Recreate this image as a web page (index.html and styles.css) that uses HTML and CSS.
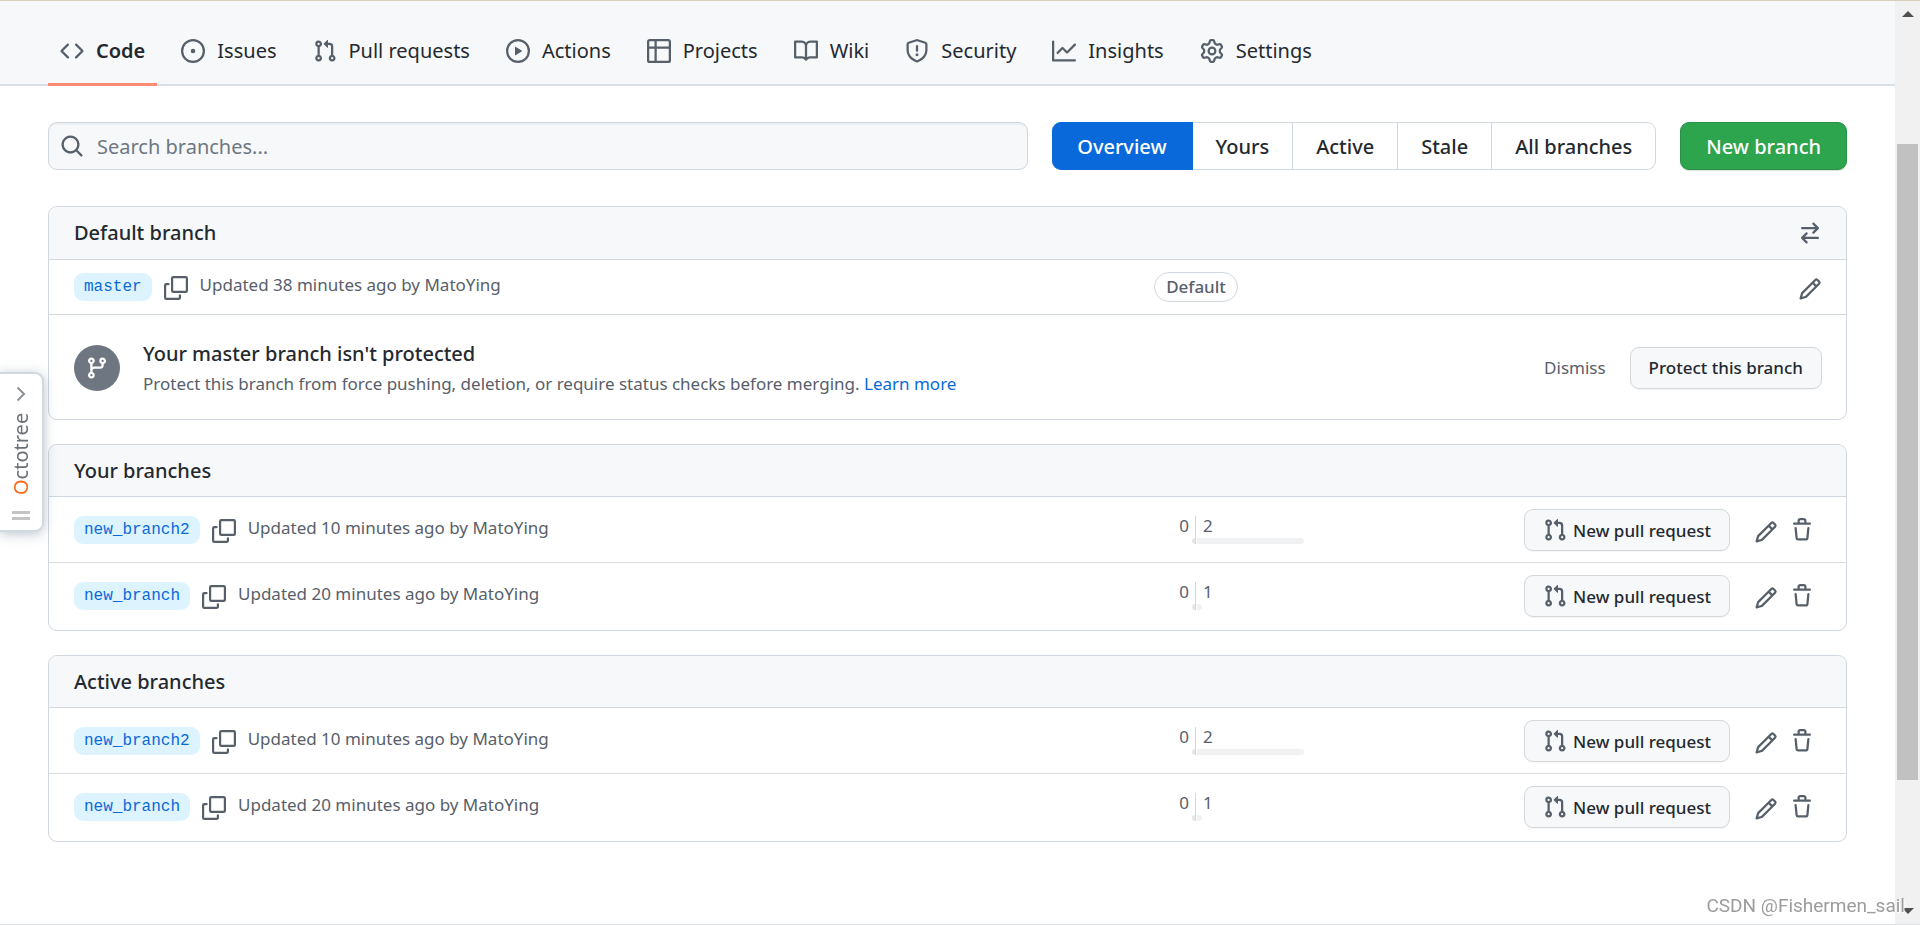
FILE: index.html
```html
<!DOCTYPE html>
<html lang="en">
<head>
<meta charset="utf-8">
<title>Branches</title>
<link rel="stylesheet" href="styles.css">
</head>
<body>
<svg class="sprite" aria-hidden="true">
  <symbol id="i-code" viewBox="0 0 16 16"><path d="M4.72 3.22a.75.75 0 011.06 1.06L2.06 8l3.72 3.72a.75.75 0 11-1.06 1.06L.47 8.53a.75.75 0 010-1.06l4.25-4.25zm6.56 0a.75.75 0 10-1.06 1.06L13.94 8l-3.72 3.72a.75.75 0 101.06 1.06l4.25-4.25a.75.75 0 000-1.06l-4.25-4.25z"/></symbol>
  <symbol id="i-issue" viewBox="0 0 16 16"><path d="M8 9.5a1.5 1.5 0 100-3 1.5 1.5 0 000 3z"/><path fill-rule="evenodd" d="M8 0a8 8 0 100 16A8 8 0 008 0zM1.5 8a6.5 6.5 0 1113 0 6.5 6.5 0 01-13 0z"/></symbol>
  <symbol id="i-pr" viewBox="0 0 16 16"><path fill-rule="evenodd" d="M7.177 3.073L9.573.677A.25.25 0 0110 .854v4.792a.25.25 0 01-.427.177L7.177 3.427a.25.25 0 010-.354zM3.75 2.5a.75.75 0 100 1.5.75.75 0 000-1.5zm-2.25.75a2.25 2.25 0 113 2.122v5.256a2.251 2.251 0 11-1.5 0V5.372A2.25 2.25 0 011.5 3.25zM11 2.5h-1V4h1a1 1 0 011 1v5.628a2.251 2.251 0 101.5 0V5A2.5 2.5 0 0011 2.5zm1 10.25a.75.75 0 111.5 0 .75.75 0 01-1.5 0zM3.75 12a.75.75 0 100 1.5.75.75 0 000-1.5z"/></symbol>
  <symbol id="i-play" viewBox="0 0 16 16"><path fill-rule="evenodd" d="M1.5 8a6.5 6.5 0 1113 0 6.5 6.5 0 01-13 0zM8 0a8 8 0 100 16A8 8 0 008 0zM6.379 5.227A.25.25 0 006 5.442v5.117a.25.25 0 00.379.214l4.264-2.559a.25.25 0 000-.428L6.379 5.227z"/></symbol>
  <symbol id="i-table" viewBox="0 0 16 16"><path fill-rule="evenodd" d="M0 1.75C0 .784.784 0 1.75 0h12.5C15.216 0 16 .784 16 1.75v12.5A1.75 1.75 0 0114.25 16H1.75A1.75 1.75 0 010 14.25V1.75zM1.5 6.5v7.75c0 .138.112.25.25.25H5v-8H1.5zM5 5H1.5V1.75a.25.25 0 01.25-.25H5V5zm1.5 1.5v8h7.75a.25.25 0 00.25-.25V6.5h-8zm8-1.5h-8V1.5h7.75a.25.25 0 01.25.25V5z"/></symbol>
  <symbol id="i-book" viewBox="0 0 16 16"><path fill-rule="evenodd" d="M0 1.75A.75.75 0 01.75 1h4.253c1.227 0 2.317.59 3 1.501A3.744 3.744 0 0111.006 1h4.245a.75.75 0 01.75.75v10.5a.75.75 0 01-.75.75h-4.507a2.25 2.25 0 00-1.591.659l-.622.621a.75.75 0 01-1.06 0l-.622-.621A2.25 2.25 0 005.258 13H.75a.75.75 0 01-.75-.75V1.75zm8.755 3a2.25 2.25 0 012.25-2.25H14.5v9h-3.757c-.71 0-1.4.201-1.992.572l.004-7.322zm-1.504 7.324l.004-5.073-.002-2.253A2.25 2.25 0 005.003 2.5H1.5v9h3.757a3.75 3.75 0 011.994.574z"/></symbol>
  <symbol id="i-shield" viewBox="0 0 16 16"><path fill-rule="evenodd" d="M7.467.133a1.75 1.75 0 011.066 0l5.25 1.68A1.75 1.75 0 0115 3.48V7c0 1.566-.32 3.182-1.303 4.682-.983 1.498-2.585 2.813-5.032 3.855a1.7 1.7 0 01-1.33 0c-2.447-1.042-4.049-2.357-5.032-3.855C1.32 10.182 1 8.566 1 7V3.48a1.75 1.75 0 011.217-1.667l5.25-1.68zm.61 1.429a.25.25 0 00-.153 0l-5.25 1.68a.25.25 0 00-.174.238V7c0 1.358.275 2.666 1.057 3.86.784 1.194 2.121 2.34 4.366 3.297a.2.2 0 00.154 0c2.245-.956 3.582-2.104 4.366-3.298C13.225 9.666 13.5 8.36 13.5 7V3.48a.25.25 0 00-.174-.237l-5.25-1.68zM9 10.5a1 1 0 11-2 0 1 1 0 012 0zm-.25-5.75a.75.75 0 10-1.5 0v3a.75.75 0 001.5 0v-3z"/></symbol>
  <symbol id="i-graph" viewBox="0 0 16 16"><path fill-rule="evenodd" d="M1.5 1.75a.75.75 0 00-1.5 0v12.5c0 .414.336.75.75.75h14.5a.75.75 0 000-1.5H1.5V1.75zm14.28 2.53a.75.75 0 00-1.06-1.06L10 7.94 7.53 5.47a.75.75 0 00-1.06 0L3.22 8.72a.75.75 0 001.06 1.06L7 7.06l2.47 2.47a.75.75 0 001.06 0l5.25-5.25z"/></symbol>
  <symbol id="i-gear" viewBox="0 0 16 16"><path fill-rule="evenodd" d="M7.429 1.525a6.593 6.593 0 011.142 0c.036.003.108.036.137.146l.289 1.105c.147.56.55.967.997 1.189.174.086.341.183.501.29.417.278.97.423 1.53.27l1.102-.303c.11-.03.175.016.195.046.219.31.41.641.573.989.014.031.022.11-.059.19l-.815.806c-.411.406-.562.957-.53 1.456a4.588 4.588 0 010 .582c-.032.499.119 1.05.53 1.456l.815.806c.08.08.073.159.059.19a6.494 6.494 0 01-.573.99c-.02.029-.086.074-.195.045l-1.103-.303c-.559-.153-1.112-.008-1.529.27-.16.107-.327.204-.5.29-.449.222-.851.628-.998 1.189l-.289 1.105c-.029.11-.101.143-.137.146a6.613 6.613 0 01-1.142 0c-.036-.003-.108-.037-.137-.146l-.289-1.105c-.147-.56-.55-.967-.997-1.189a4.502 4.502 0 01-.501-.29c-.417-.278-.97-.423-1.53-.27l-1.102.303c-.11.03-.175-.016-.195-.046a6.492 6.492 0 01-.573-.989c-.014-.031-.022-.11.059-.19l.815-.806c.411-.406.562-.957.53-1.456a4.587 4.587 0 010-.582c.032-.499-.119-1.05-.53-1.456l-.815-.806c-.08-.08-.073-.159-.059-.19a6.44 6.44 0 01.573-.99c.02-.029.086-.075.195-.045l1.103.303c.559.153 1.112.008 1.529-.27.16-.107.327-.204.5-.29.449-.222.851-.628.998-1.189l.289-1.105c.029-.11.101-.143.137-.146zM8 0c-.236 0-.47.01-.701.03-.743.065-1.29.615-1.458 1.261l-.29 1.106c-.017.066-.078.158-.211.224a5.994 5.994 0 00-.668.386c-.123.082-.233.09-.3.071L3.27 2.776c-.644-.177-1.392.02-1.82.63a7.977 7.977 0 00-.704 1.217c-.315.675-.111 1.422.363 1.891l.815.806c.05.048.098.147.088.294a6.084 6.084 0 000 .772c.01.147-.038.246-.088.294l-.815.806c-.474.469-.678 1.216-.363 1.891.2.428.436.835.704 1.218.428.609 1.176.806 1.82.63l1.103-.303c.066-.019.176-.011.299.071.213.143.436.272.668.386.133.066.194.158.212.224l.289 1.106c.169.646.715 1.196 1.458 1.26a8.094 8.094 0 001.402 0c.743-.064 1.29-.614 1.458-1.26l.29-1.106c.017-.066.078-.158.211-.224a5.98 5.98 0 00.668-.386c.123-.082.233-.09.3-.071l1.102.302c.644.177 1.392-.02 1.82-.63.268-.382.505-.789.704-1.217.315-.675.111-1.422-.364-1.891l-.814-.806c-.05-.048-.098-.147-.088-.294a6.1 6.1 0 000-.772c-.01-.147.039-.246.088-.294l.814-.806c.475-.469.679-1.216.364-1.891a7.992 7.992 0 00-.704-1.218c-.428-.609-1.176-.806-1.82-.63l-1.103.303c-.066.019-.176.011-.299-.071a5.991 5.991 0 00-.668-.386c-.133-.066-.194-.158-.212-.224L10.16 1.29C9.99.645 9.444.095 8.701.031A8.094 8.094 0 008 0zm1.5 8a1.5 1.5 0 11-3 0 1.5 1.5 0 013 0zM11 8a3 3 0 11-6 0 3 3 0 016 0z"/></symbol>
  <symbol id="i-search" viewBox="0 0 16 16"><path fill-rule="evenodd" d="M11.5 7a4.499 4.499 0 11-8.998 0A4.499 4.499 0 0111.5 7zm-.82 4.74a6 6 0 111.06-1.06l3.04 3.04a.75.75 0 11-1.06 1.06l-3.04-3.04z"/></symbol>
  <symbol id="i-switch" viewBox="0 0 16 16"><path fill-rule="evenodd" d="M5.22 14.78a.75.75 0 001.06-1.06L4.56 12h8.69a.75.75 0 000-1.5H4.56l1.72-1.72a.75.75 0 00-1.06-1.06l-3 3a.75.75 0 000 1.06l3 3zm5.56-6.5a.75.75 0 11-1.06-1.06l1.72-1.72H2.75a.75.75 0 010-1.5h8.69L9.72 2.28a.75.75 0 011.06-1.06l3 3a.75.75 0 010 1.06l-3 3z"/></symbol>
  <symbol id="i-pencil" viewBox="0 0 16 16"><path fill-rule="evenodd" d="M11.013 1.427a1.75 1.75 0 012.474 0l1.086 1.086a1.75 1.75 0 010 2.474l-8.61 8.61c-.21.21-.47.364-.756.445l-3.251.93a.75.75 0 01-.927-.928l.929-3.25a1.75 1.75 0 01.445-.758l8.61-8.61zm1.414 1.06a.25.25 0 00-.354 0L10.811 3.75l1.439 1.44 1.263-1.263a.25.25 0 000-.354l-1.086-1.086zM11.189 6.25L9.75 4.81l-6.286 6.287a.25.25 0 00-.064.108l-.558 1.953 1.953-.558a.249.249 0 00.108-.064l6.286-6.286z"/></symbol>
  <symbol id="i-trash" viewBox="0 0 16 16"><path fill-rule="evenodd" d="M6.5 1.75a.25.25 0 01.25-.25h2.5a.25.25 0 01.25.25V3h-3V1.75zm4.5 0V3h2.25a.75.75 0 010 1.5H2.75a.75.75 0 010-1.5H5V1.75C5 .784 5.784 0 6.75 0h2.5C10.216 0 11 .784 11 1.75zM4.496 6.675a.75.75 0 10-1.492.15l.66 6.6A1.75 1.75 0 005.405 15h5.19c.9 0 1.652-.681 1.741-1.576l.66-6.6a.75.75 0 00-1.492-.149l-.66 6.6a.25.25 0 01-.249.225h-5.19a.25.25 0 01-.249-.225l-.66-6.6z"/></symbol>
  <symbol id="i-branch" viewBox="0 0 16 16"><path fill-rule="evenodd" d="M11.75 2.5a.75.75 0 100 1.5.75.75 0 000-1.5zm-2.25.75a2.25 2.25 0 113 2.122V6A2.5 2.5 0 0110 8.5H6a1 1 0 00-1 1v1.128a2.251 2.251 0 11-1.5 0V5.372a2.25 2.25 0 111.5 0v1.836A2.492 2.492 0 016 7h4a1 1 0 001-1v-.628A2.25 2.25 0 019.5 3.25zM4.25 12a.75.75 0 100 1.5.75.75 0 000-1.5zM3.5 3.25a.75.75 0 111.5 0 .75.75 0 01-1.5 0z"/></symbol>
  <symbol id="i-copy" viewBox="0 0 24 24"><g fill="none" stroke="currentColor" stroke-width="2.2" stroke-linecap="round" stroke-linejoin="round"><rect x="8.1" y="1.1" width="14.8" height="14.8" rx="1.2"/><path d="M4.6 8.1H2.3A1.2 1.2 0 0 0 1.1 9.3v12.4a1.2 1.2 0 0 0 1.2 1.2h12.4a1.2 1.2 0 0 0 1.2-1.2v-2.4"/></g></symbol>
</svg>

<div class="page">
  <header class="repo-nav">
    <nav class="tabs" aria-label="Repository">
      <a class="tab tab-current" href="#" aria-current="page"><svg class="icon"><use href="#i-code"/></svg>Code</a>
      <a class="tab" href="#"><svg class="icon"><use href="#i-issue"/></svg>Issues</a>
      <a class="tab" href="#"><svg class="icon"><use href="#i-pr"/></svg>Pull requests</a>
      <a class="tab" href="#"><svg class="icon"><use href="#i-play"/></svg>Actions</a>
      <a class="tab" href="#"><svg class="icon"><use href="#i-table"/></svg>Projects</a>
      <a class="tab" href="#"><svg class="icon"><use href="#i-book"/></svg>Wiki</a>
      <a class="tab" href="#"><svg class="icon"><use href="#i-shield"/></svg>Security</a>
      <a class="tab" href="#"><svg class="icon"><use href="#i-graph"/></svg>Insights</a>
      <a class="tab" href="#"><svg class="icon"><use href="#i-gear"/></svg>Settings</a>
    </nav>
  </header>

  <main class="content">
    <div class="toolbar">
      <form class="search" role="search">
        <svg class="icon"><use href="#i-search"/></svg>
        <input class="search-input" type="text" placeholder="Search branches..." aria-label="Search branches">
      </form>
      <nav class="filters" aria-label="Branch filter">
        <a class="filter filter-current" href="#" aria-current="page">Overview</a>
        <a class="filter" href="#">Yours</a>
        <a class="filter" href="#">Active</a>
        <a class="filter" href="#">Stale</a>
        <a class="filter" href="#">All branches</a>
      </nav>
      <button class="btn-primary" type="button">New branch</button>
    </div>

    <section class="panel">
      <div class="panel-head panel-head-actions">
        <h2 class="panel-title">Default branch</h2>
        <button class="icon-btn" type="button" aria-label="Switch default branch"><svg class="icon"><use href="#i-switch"/></svg></button>
      </div>
      <div class="row row-default">
        <div class="name">
          <a class="chip" href="#">master</a>
          <button class="icon-btn copy" type="button" aria-label="Copy branch name"><svg class="icon"><use href="#i-copy"/></svg></button>
          <span class="updated">Updated 38 minutes ago by MatoYing</span>
        </div>
        <div class="middle"><span class="label">Default</span></div>
        <div class="actions"><button class="icon-btn rename" type="button" aria-label="Rename branch"><svg class="icon"><use href="#i-pencil"/></svg></button></div>
      </div>
      <div class="notice">
        <span class="notice-icon"><svg class="icon"><use href="#i-branch"/></svg></span>
        <div class="notice-text">
          <h3 class="notice-title">Your master branch isn't protected</h3>
          <p class="notice-body">Protect this branch from force pushing, deletion, or require status checks before merging. <a class="link" href="#">Learn more</a></p>
        </div>
        <button class="dismiss" type="button">Dismiss</button>
        <button class="btn" type="button">Protect this branch</button>
      </div>
    </section>

    <section class="panel">
      <div class="panel-head"><h2 class="panel-title">Your branches</h2></div>
      <div class="row">
        <div class="name">
          <a class="chip" href="#">new_branch2</a>
          <button class="icon-btn copy" type="button" aria-label="Copy branch name"><svg class="icon"><use href="#i-copy"/></svg></button>
          <span class="updated">Updated 10 minutes ago by MatoYing</span>
        </div>
        <div class="diff">
          <div class="behind"><span class="count">0</span><span class="meter" style="width:3px"></span></div>
          <div class="ahead"><span class="count">2</span><span class="meter" style="width:107px"></span></div>
        </div>
        <div class="actions actions-full">
          <button class="btn" type="button"><svg class="icon"><use href="#i-pr"/></svg>New pull request</button>
          <button class="icon-btn rename" type="button" aria-label="Rename branch"><svg class="icon"><use href="#i-pencil"/></svg></button>
          <button class="icon-btn" type="button" aria-label="Delete branch"><svg class="icon"><use href="#i-trash"/></svg></button>
        </div>
      </div>
      <div class="row">
        <div class="name">
          <a class="chip" href="#">new_branch</a>
          <button class="icon-btn copy" type="button" aria-label="Copy branch name"><svg class="icon"><use href="#i-copy"/></svg></button>
          <span class="updated">Updated 20 minutes ago by MatoYing</span>
        </div>
        <div class="diff">
          <div class="behind"><span class="count">0</span><span class="meter" style="width:3px"></span></div>
          <div class="ahead"><span class="count">1</span><span class="meter" style="width:5px"></span></div>
        </div>
        <div class="actions actions-full">
          <button class="btn" type="button"><svg class="icon"><use href="#i-pr"/></svg>New pull request</button>
          <button class="icon-btn rename" type="button" aria-label="Rename branch"><svg class="icon"><use href="#i-pencil"/></svg></button>
          <button class="icon-btn" type="button" aria-label="Delete branch"><svg class="icon"><use href="#i-trash"/></svg></button>
        </div>
      </div>
    </section>

    <section class="panel">
      <div class="panel-head"><h2 class="panel-title">Active branches</h2></div>
      <div class="row">
        <div class="name">
          <a class="chip" href="#">new_branch2</a>
          <button class="icon-btn copy" type="button" aria-label="Copy branch name"><svg class="icon"><use href="#i-copy"/></svg></button>
          <span class="updated">Updated 10 minutes ago by MatoYing</span>
        </div>
        <div class="diff">
          <div class="behind"><span class="count">0</span><span class="meter" style="width:3px"></span></div>
          <div class="ahead"><span class="count">2</span><span class="meter" style="width:107px"></span></div>
        </div>
        <div class="actions actions-full">
          <button class="btn" type="button"><svg class="icon"><use href="#i-pr"/></svg>New pull request</button>
          <button class="icon-btn rename" type="button" aria-label="Rename branch"><svg class="icon"><use href="#i-pencil"/></svg></button>
          <button class="icon-btn" type="button" aria-label="Delete branch"><svg class="icon"><use href="#i-trash"/></svg></button>
        </div>
      </div>
      <div class="row">
        <div class="name">
          <a class="chip" href="#">new_branch</a>
          <button class="icon-btn copy" type="button" aria-label="Copy branch name"><svg class="icon"><use href="#i-copy"/></svg></button>
          <span class="updated">Updated 20 minutes ago by MatoYing</span>
        </div>
        <div class="diff">
          <div class="behind"><span class="count">0</span><span class="meter" style="width:3px"></span></div>
          <div class="ahead"><span class="count">1</span><span class="meter" style="width:5px"></span></div>
        </div>
        <div class="actions actions-full">
          <button class="btn" type="button"><svg class="icon"><use href="#i-pr"/></svg>New pull request</button>
          <button class="icon-btn rename" type="button" aria-label="Rename branch"><svg class="icon"><use href="#i-pencil"/></svg></button>
          <button class="icon-btn" type="button" aria-label="Delete branch"><svg class="icon"><use href="#i-trash"/></svg></button>
        </div>
      </div>
    </section>
  </main>
</div>

<div class="scrollbar" aria-hidden="true">
  <svg class="scroll-arrow" viewBox="0 0 12 6"><path d="M6 0l6 6H0z"/></svg>
  <div class="scroll-track"><div class="scroll-thumb"></div></div>
  <svg class="scroll-arrow" viewBox="0 0 12 6"><path d="M0 0h12L6 6z"/></svg>
</div>

<aside class="octotree">
  <svg class="chevron" viewBox="0 0 10 16"><path d="M1.5 1.5L8 8l-6.500 6.500"/></svg>
  <span class="octotree-name"><span class="octotree-o">O</span>ctotree</span>
  <span class="grip"></span>
</aside>
<div class="watermark">CSDN @Fishermen_sail</div>
</body>
</html>
```

FILE: styles.css
```css
* { box-sizing: border-box; }

body {
  margin: 0;
  min-height: 100vh;
  display: flex;
  border-top: 1px solid #d8cfbb;
  border-bottom: 1px solid #dfe1e3;
  background: #fff;
  color: #24292f;
  font-family: "Noto Sans", "Open Sans", sans-serif;
  font-size: 17px;
}

a { color: inherit; text-decoration: none; }

button {
  margin: 0;
  padding: 0;
  border: 0;
  background: none;
  color: inherit;
  font: inherit;
  cursor: pointer;
}

.sprite { position: absolute; width: 0; height: 0; }

.icon {
  display: block;
  flex: none;
  width: 24px;
  height: 24px;
  fill: currentColor;
  color: #57606a;
}

.page { flex: 1; min-width: 0; }

/* Repository tabs */
.repo-nav {
  padding: 17px 48px 0;
  background: #f6f8fa;
  box-shadow: inset 0 -2px #d8dee4;
}

.tabs { display: flex; gap: 12px; }

.tab {
  display: flex;
  align-items: center;
  gap: 12px;
  height: 68px;
  padding: 0 12px;
  border-bottom: 3px solid transparent;
  font-size: 20px;
  line-height: 30px;
}

.tab-current { border-bottom-color: #fd8c73; font-weight: 600; }

/* Toolbar */
.content { padding: 36px 48px 48px; }

.toolbar { display: flex; gap: 24px; margin-bottom: 36px; }

.search {
  flex: 1;
  display: flex;
  align-items: center;
  gap: 13px;
  height: 48px;
  padding: 0 11px;
  border: 1px solid #d0d7de;
  border-radius: 9px;
  background: #f6f8fa;
  box-shadow: inset 0 2px rgba(208, 215, 222, 0.2);
}

.search-input {
  flex: 1;
  min-width: 0;
  padding: 0;
  border: 0;
  outline: 0;
  background: none;
  font: inherit;
  font-size: 20px;
}

.search-input::placeholder { color: #6e7781; opacity: 1; }

.filters { display: flex; }

.filter {
  height: 48px;
  padding: 0 23px;
  border: 1px solid #d0d7de;
  border-left-width: 0;
  font-size: 20px;
  font-weight: 500;
  line-height: 48px;
}

.filter-current {
  padding: 0 25px;
  border-color: #0969da;
  border-radius: 9px 0 0 9px;
  background: #0969da;
  color: #fff;
}

.filter:last-child { border-radius: 0 9px 9px 0; }

.btn-primary {
  height: 48px;
  padding: 0 25px;
  border: 1px solid #2a9147;
  border-radius: 9px;
  background: #2da44e;
  box-shadow: 0 1px 1px rgba(27, 31, 36, 0.15);
  color: #fff;
  font-size: 20px;
  font-weight: 500;
}

/* Panels */
.panel {
  margin-bottom: 24px;
  border: 1px solid #d0d7de;
  border-radius: 9px;
}

.panel-head {
  display: flex;
  align-items: center;
  justify-content: space-between;
  height: 52px;
  padding: 0 24px 0 25px;
  border-bottom: 1px solid #d0d7de;
  border-radius: 9px 9px 0 0;
  background: #f6f8fa;
}

.panel-head-actions { height: 53px; }

.panel-title { margin: 0; font-size: 20px; font-weight: 500; line-height: 30px; }

.row {
  display: grid;
  grid-template-columns: 1fr 252px 500px;
  align-items: center;
  padding: 12px 24px 11px 25px;
}

.row + .row { padding-bottom: 13px; border-top: 1px solid #d8dee4; }

.row-default { height: 54px; padding-top: 0; padding-bottom: 0; }

.name { display: flex; align-items: center; }

.chip {
  height: 28px;
  padding: 0 10px;
  border-radius: 9px;
  background: #ddf4ff;
  color: #0969da;
  font-family: "Liberation Mono", monospace;
  font-size: 16px;
  line-height: 28px;
}

.icon-btn { display: block; flex: none; }

.copy { margin: 2px 12px 0; }

.updated { padding-bottom: 4px; color: #57606a; line-height: 24px; }

.middle { display: flex; justify-content: center; }

.label {
  height: 30px;
  padding: 0 11px;
  border: 1px solid #d0d7de;
  border-radius: 15px;
  color: #57606a;
  font-weight: 500;
  line-height: 28px;
}

/* Behind / ahead counts */
.diff {
  display: grid;
  grid-template-columns: 1fr 1fr;
  height: 28px;
  color: #57606a;
}

.behind,
.ahead {
  display: flex;
  flex-direction: column;
  justify-content: space-between;
}

.behind { align-items: flex-end; border-right: 1px solid #d0d7de; }
.ahead { padding-left: 1px; }
.count { padding: 0 6px; line-height: 20px; }
.meter { height: 6px; background: #eff1f3; }
.behind .meter { border-radius: 3px 0 0 3px; background: #e4e7ea; }
.ahead .meter { border-radius: 0 3px 3px 0; }

.actions { display: flex; align-items: center; justify-content: flex-end; }
.actions-full { gap: 12px; padding-right: 8px; }
.rename { padding-top: 3px; }
.actions-full .rename { margin-left: 12px; }

.btn {
  display: flex;
  align-items: center;
  gap: 6px;
  height: 42px;
  padding: 0 18px;
  border: 1px solid #d5d8da;
  border-radius: 9px;
  background: #f6f8fa;
  box-shadow: 0 1px rgba(27, 31, 36, 0.04);
  font-weight: 500;
}

/* Protection notice */
.notice {
  display: flex;
  align-items: center;
  padding: 23px 24px 22px 25px;
  border-top: 1px solid #d0d7de;
}

.notice-icon {
  display: grid;
  place-items: center;
  width: 46px;
  height: 46px;
  margin-right: 23px;
  border-radius: 50%;
  background: #6e7781;
}

.notice-icon .icon { color: #fff; }
.notice-text { flex: 1; }
.notice-title { margin: 0; font-size: 20px; font-weight: 500; line-height: 32px; }
.notice-body { margin: 0; color: #57606a; line-height: 27px; }
.link { color: #0969da; }
.dismiss { margin-right: 24px; color: #57606a; }

/* Window scrollbar */
.scrollbar {
  display: flex;
  flex-direction: column;
  align-items: center;
  width: 25px;
  padding: 10px 0;
  background: #f1f1f1;
}

.scroll-arrow { width: 12px; height: 6px; fill: #505050; }
.scroll-track { flex: 1; width: 21px; padding: 127px 0 128px; }
.scroll-thumb { height: 100%; background: #c1c1c1; }

/* Octotree drawer handle */
.octotree {
  position: fixed;
  top: 372px;
  left: 0;
  display: flex;
  flex-direction: column;
  align-items: center;
  width: 44px;
  height: 160px;
  padding: 12px 1px 10px 0;
  border: 2px solid #d0d9e2;
  border-left: 0;
  border-radius: 0 9px 9px 0;
  background: #fff;
  box-shadow: 0 2px 12px rgba(120, 140, 160, 0.5);
}

.chevron {
  width: 10px;
  height: 16px;
  fill: none;
  stroke: #8c9196;
  stroke-width: 2;
}

.octotree-name {
  flex: 1;
  padding: 16px 0 0;
  color: #6a7078;
  writing-mode: vertical-rl;
  transform: rotate(180deg);
  font-size: 20px;
  line-height: 24px;
}

.octotree-o { color: #fa6a1c; }

.grip {
  width: 18px;
  height: 9px;
  border: solid #c4c4c4;
  border-width: 3px 0;
}

.watermark {
  position: fixed;
  right: 15px;
  bottom: 7px;
  color: #9c9c9c;
  font-family: Roboto, "Liberation Sans", sans-serif;
  font-size: 19px;
  line-height: 24px;
  text-shadow: 1px 1px #fff;
}
```
